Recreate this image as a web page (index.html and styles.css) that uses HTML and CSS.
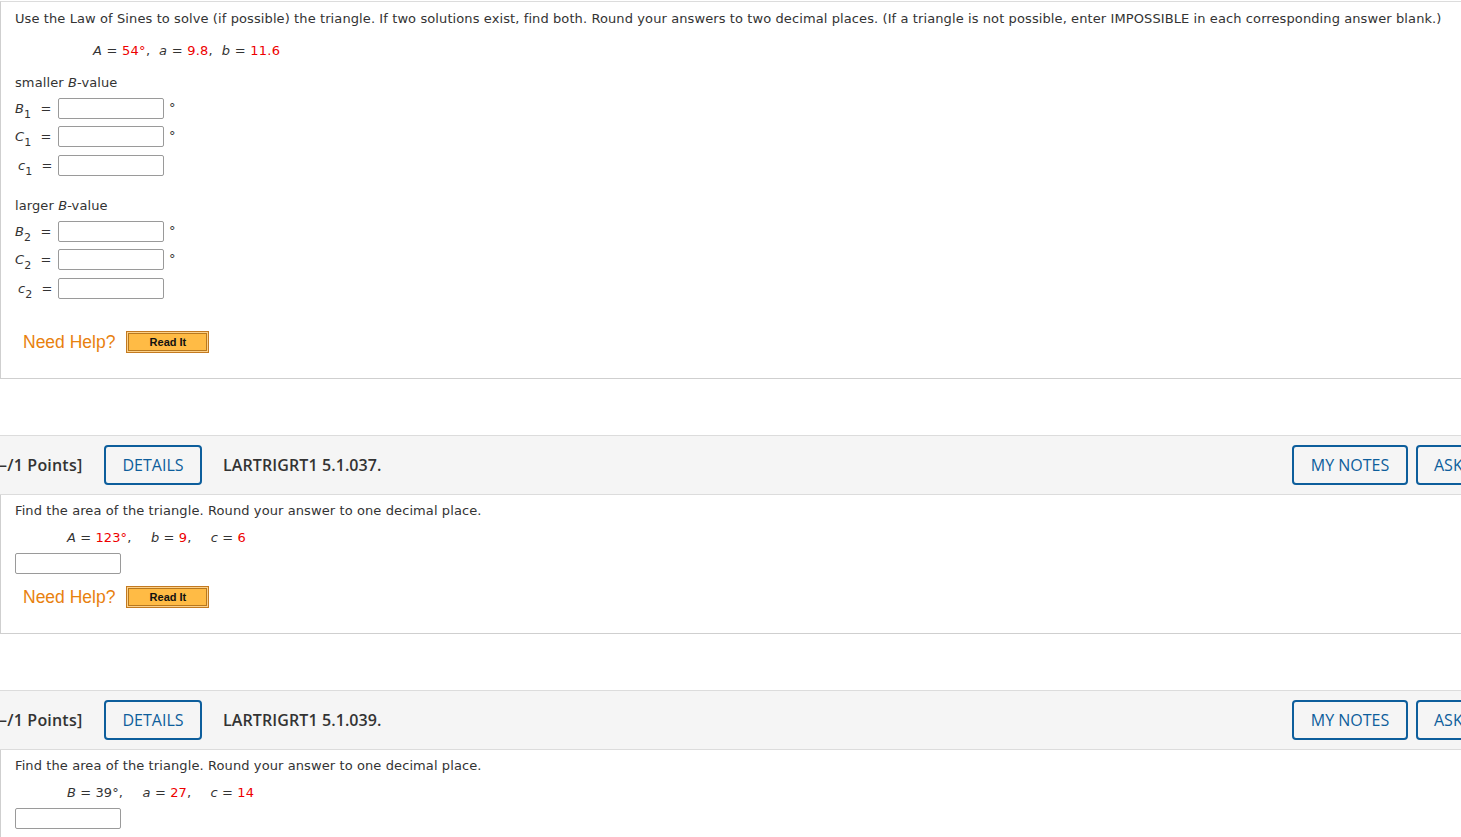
FILE: index.html
```html
<!DOCTYPE html>
<html>
<head>
<meta charset="utf-8">
<link rel="stylesheet" href="styles.css">
</head>
<body>
<div class="page">
  <section class="panel panel-first">
    <p class="text">Use the Law of Sines to solve (if possible) the triangle. If two solutions exist, find both. Round your answers to two decimal places. (If a triangle is not possible, enter IMPOSSIBLE in each corresponding answer blank.)</p>
    <p class="formula f1"><i>A</i> = <span class="red">54°</span>,&nbsp; <i>a</i> = <span class="red">9.8</span>,&nbsp; <i>b</i> = <span class="red">11.6</span></p>
    <p class="text sub-head">smaller <i>B</i>-value</p>
    <div class="row r-first"><span class="lbl"><i>B</i><sub>1</sub> <span class="eq">=</span></span><span class="inp"></span><span class="deg">°</span></div>
    <div class="row r-mid"><span class="lbl"><i>C</i><sub>1</sub> <span class="eq">=</span></span><span class="inp"></span><span class="deg">°</span></div>
    <div class="row r-last"><span class="lbl lc"><i>c</i><sub>1</sub> <span class="eq">=</span></span><span class="inp"></span></div>
    <p class="text sub-head2">larger <i>B</i>-value</p>
    <div class="row r-first"><span class="lbl"><i>B</i><sub>2</sub> <span class="eq">=</span></span><span class="inp"></span><span class="deg">°</span></div>
    <div class="row r-mid"><span class="lbl"><i>C</i><sub>2</sub> <span class="eq">=</span></span><span class="inp"></span><span class="deg">°</span></div>
    <div class="row r-last"><span class="lbl lc"><i>c</i><sub>2</sub> <span class="eq">=</span></span><span class="inp"></span></div>
    <div class="help help-first"><span class="need">Need Help?</span><span class="readit"><span>Read It</span></span></div>
  </section>

  <header class="qhead">
    <span class="points">–/1 Points]</span>
    <span class="btn details">DETAILS</span>
    <span class="qid">LARTRIGRT1 5.1.037.</span>
    <span class="right">
      <span class="btn notes">MY NOTES</span>
      <span class="btn ask">ASK YOUR TEACHER</span>
    </span>
  </header>
  <section class="panel">
    <p class="text">Find the area of the triangle. Round your answer to one decimal place.</p>
    <p class="formula f2"><i>A</i> = <span class="red">123°</span>,<span class="g"></span><i>b</i> = <span class="red">9</span>,<span class="g"></span><i>c</i> = <span class="red">6</span></p>
    <div class="solo"><span class="inp"></span></div>
    <div class="help help-solo"><span class="need">Need Help?</span><span class="readit"><span>Read It</span></span></div>
  </section>

  <header class="qhead">
    <span class="points">–/1 Points]</span>
    <span class="btn details">DETAILS</span>
    <span class="qid">LARTRIGRT1 5.1.039.</span>
    <span class="right">
      <span class="btn notes">MY NOTES</span>
      <span class="btn ask">ASK YOUR TEACHER</span>
    </span>
  </header>
  <section class="panel">
    <p class="text">Find the area of the triangle. Round your answer to one decimal place.</p>
    <p class="formula f2"><i>B</i> = 39°,<span class="g"></span><i>a</i> = <span class="red">27</span>,<span class="g"></span><i>c</i> = <span class="red">14</span></p>
    <div class="solo"><span class="inp"></span></div>
  </section>
</div>
</body>
</html>
```

FILE: styles.css
```css
html, body {
  margin: 0;
  padding: 0;
  overflow: hidden;
  background: #fff;
}
body {
  font-family: "DejaVu Sans", Verdana, sans-serif;
  font-size: 13px;
  color: #333;
  letter-spacing: 0.1px;
}
.page {
  width: 1616px;
  padding-top: 1px;
}
.panel {
  border-left: 1px solid #cfcfcf;
  border-bottom: 1px solid #cfcfcf;
  padding: 6px 14px 25px 14px;
}
.panel-first {
  border-top: 1px solid #dcdcdc;
  padding-top: 7px;
}
p { margin: 0; }
.text, .formula {
  line-height: 16px;
  padding-top: 2px;
}
.formula { margin-top: 9px; }
.panel-first .formula { margin-top: 14px; }
.f1 { padding-left: 78px; letter-spacing: 0.25px; }
.f2 { padding-left: 52px; }
.g { display: inline-block; width: 19.5px; }
.red { color: #ee0000; }
.sub-head { margin-top: 14px; }
.sub-head2 { margin-top: 20px; }
.row {
  display: flex;
  align-items: center;
  height: 21px;
}
.r-first { margin-top: 7px; }
.r-mid { margin-top: 7px; }
.r-last { margin-top: 8px; }
.lbl {
  width: 43px;
  line-height: 21px;
  white-space: nowrap;
}
.lbl.lc { padding-left: 3px; width: 40px; }
.lbl sub {
  font-size: 11px;
  vertical-align: -5px;
  line-height: 0;
}
.eq { margin-left: 5px; }
.inp {
  display: block;
  box-sizing: border-box;
  width: 106px;
  height: 21px;
  border: 1px solid #9a9a9a;
  border-radius: 2px;
  background: #fff;
}
.deg {
  align-self: flex-start;
  margin-left: 5px;
  margin-top: 3px;
  line-height: 14px;
  font-size: 13px;
}
.solo { margin-top: 7px; display: flex; }
.help {
  display: flex;
  align-items: center;
  height: 22px;
  padding-left: 8px;
  letter-spacing: 0;
}
.help-first { margin-top: 32px; }
.help-solo { margin-top: 12px; }
.need {
  font-family: "Liberation Sans", Arial, sans-serif;
  font-size: 17.5px;
  color: #e8810e;
  margin-right: 11px;
}
.readit {
  display: flex;
  box-sizing: border-box;
  width: 83px;
  height: 22px;
  border: 1px solid #c47a20;
  padding: 1px;
  background: #fcd18a;
}
.readit span {
  flex: 1;
  display: flex;
  align-items: center;
  justify-content: center;
  border: 1px solid #b8781e;
  background: #ffbb45;
  font-family: "Liberation Sans", Arial, sans-serif;
  font-weight: bold;
  font-size: 11px;
  color: #111;
}
.qhead {
  display: flex;
  align-items: center;
  margin-top: 56px;
  background: #f5f5f5;
  border-top: 1px solid #dcdcdc;
  border-bottom: 1px solid #dcdcdc;
  padding: 9px 0;
  font-family: "Open Sans", sans-serif;
  font-size: 16px;
  letter-spacing: 0;
}
.points {
  font-weight: 600;
  color: #333;
  margin-left: -1px;
  width: 105px;
  letter-spacing: 0.2px;
}
.btn {
  display: flex;
  align-items: center;
  justify-content: center;
  box-sizing: border-box;
  height: 40px;
  border: 2px solid #0d5e9c;
  border-radius: 4px;
  color: #0d5e9c;
  background: #fff;
  padding: 0 16px;
  white-space: nowrap;
}
.details { width: 98px; background: transparent; }
.qid {
  font-weight: 600;
  color: #333;
  margin-left: 21px;
  letter-spacing: 0.1px;
}
.right {
  margin-left: auto;
  display: flex;
  gap: 8px;
}
.notes { width: 116px; background: transparent; }
.ask {
  width: 200px;
  background: transparent;
  justify-content: flex-start;
}
```
